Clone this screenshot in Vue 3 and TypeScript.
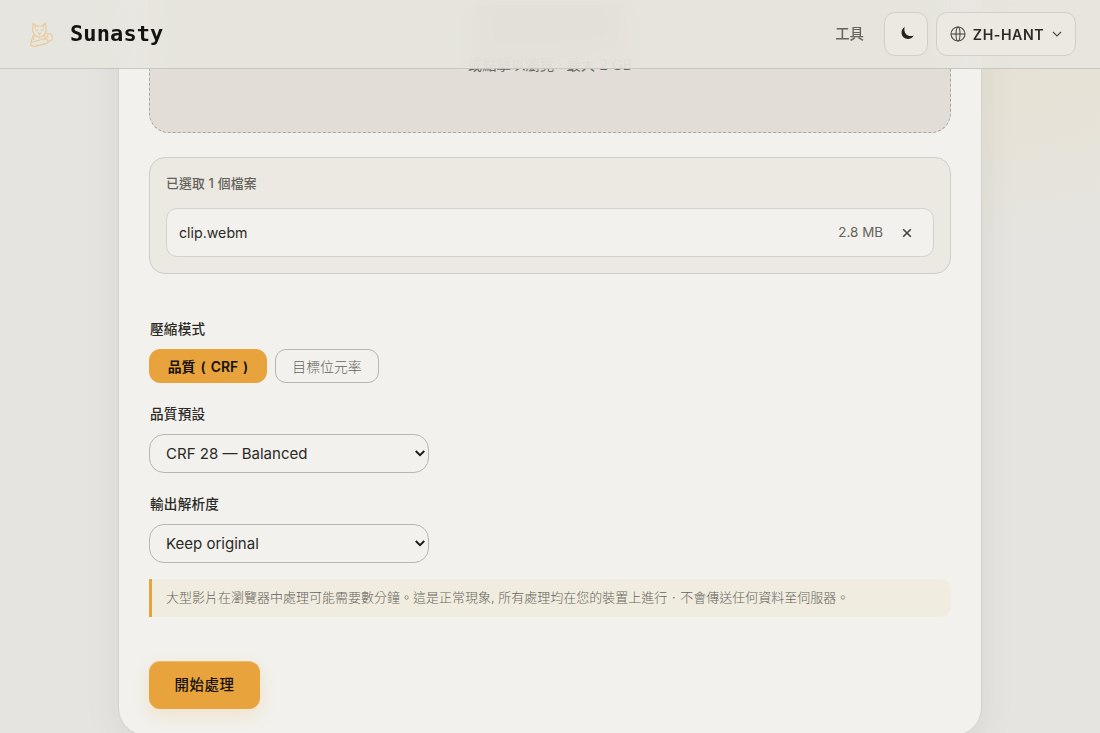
<script setup lang="ts">
import { ref } from 'vue'

type Mode = 'crf' | 'bitrate'

const files = ref([{ name: 'clip.webm', size: '2.8 MB' }])
const mode = ref<Mode>('crf')
const preset = ref('CRF 28 — Balanced')
const resolution = ref('Keep original')

function removeFile(name: string) {
  files.value = files.value.filter((f) => f.name !== name)
}
</script>

<template>
  <div class="page">
    <header class="topbar">
      <a class="brand">
        <svg class="cat" viewBox="0 0 28 28" fill="none" stroke="#e9c999" stroke-width="1.1" stroke-linejoin="round" stroke-linecap="round">
          <path d="M6 3.2 9.6 6h5.2L18.6 3l.5 8.2-2.2 4.4-4.4 1.9-4.6-2L5.7 11z" />
          <path d="m8.5 9.8 2 .8m3.7 0 2-.8M11.3 13l1.1.8 1.1-.8M12.4 13.8v1.5M8 5.8l.5 2m8.2-2-.6 2" />
          <path d="M6.500 15 4.300 21l-.8 4 3.200 1.600 13.200-3.200 1.400-2.600-2.300-1.800-3-.3-9 3-2.700.8" />
          <path d="M18.600 13.700h4.600l2.200 2.600-.4 3.800-3.400 1.700M7 16.500l-.5 3.300M21 14.500l-1.200 3.200M17.600 15.500l.6 3.500" />
        </svg>
        <span class="wordmark">Sunasty</span>
      </a>
      <nav class="actions">
        <a class="tools">工具</a>
        <button class="control theme" aria-label="Theme">
          <svg width="15" height="15" viewBox="0 0 15 15">
            <path d="M4.700.7C2.500 2.500 1.100 4.700 1.600 7.700c.6 3.200 3 5.200 6.200 5.200 2.700 0 4.900-1.200 5.900-3.500-2.800 1.200-5.900.7-7.700-1.400C4.300 6 4 3.300 4.700.7z" fill="#24221d" />
          </svg>
        </button>
        <button class="control lang">
          <svg width="16" height="16" viewBox="0 0 16 16" fill="none" stroke="#4c4a43" stroke-width="1.1">
            <circle cx="8" cy="8" r="7" />
            <ellipse cx="8" cy="8" rx="2" ry="7" />
            <path d="M1 8h14" />
          </svg>
          <span class="code">ZH-HANT</span>
          <svg class="caret" width="10" height="6" viewBox="0 0 10 6" fill="none" stroke="#4c4a43" stroke-width="1.1">
            <path d="m1 1 4 4 4-4" />
          </svg>
        </button>
      </nav>
    </header>

    <main class="card">
      <div class="dropzone">
        <span class="glow"></span>
        <span class="hint">或點擊以瀏覽 · 最大 2 GB</span>
      </div>

      <section class="files">
        <div class="count">已選取 {{ files.length }} 個檔案</div>
        <div v-for="f in files" :key="f.name" class="file">
          <span class="name">{{ f.name }}</span>
          <span class="size">{{ f.size }}</span>
          <button class="remove" aria-label="Remove" @click="removeFile(f.name)">
            <svg width="10" height="10" viewBox="0 0 10 10" stroke="#45433d" stroke-width="1.6" fill="none">
              <path d="m1.200 1.200 7.600 7.600m0-7.600-7.600 7.600" />
            </svg>
          </button>
        </div>
      </section>

      <div class="label">壓縮模式</div>
      <div class="modes">
        <button class="mode crf" :class="{ active: mode === 'crf' }" @click="mode = 'crf'">品質 ( CRF )</button>
        <button class="mode bitrate" :class="{ active: mode === 'bitrate' }" @click="mode = 'bitrate'">目標位元率</button>
      </div>

      <div class="label preset-label">品質預設</div>
      <div class="select">
        <span>{{ preset }}</span>
        <svg width="10" height="7" viewBox="0 0 10 7" fill="none" stroke="#1c1b18" stroke-width="1.9"><path d="m.8 1 4.200 4.200L9.200 1" /></svg>
      </div>

      <div class="label resolution-label">輸出解析度</div>
      <div class="select">
        <span>{{ resolution }}</span>
        <svg width="10" height="7" viewBox="0 0 10 7" fill="none" stroke="#1c1b18" stroke-width="1.9"><path d="m.8 1 4.200 4.200L9.200 1" /></svg>
      </div>

      <p class="notice">大型影片在瀏覽器中處理可能需要數分鐘。這是正常現象, 所有處理均在您的裝置上進行<i>·</i>不會傳送任何資料至伺服器。</p>

      <button class="start">開始處理</button>
    </main>
  </div>
</template>

<style>
body {
  background: #e5e4e0;
  overflow: hidden;
}
</style>

<style scoped>
.page {
  box-sizing: border-box;
  height: 733px;
  overflow: hidden;
  background:
    radial-gradient(ellipse 300px 220px at 1010px 20px, rgba(232, 222, 196, 0.5), rgba(232, 222, 196, 0.3) 55%, transparent),
    #e5e4e0;
  font-family: Inter, "Noto Sans CJK TC", sans-serif;
  color: #2b2a26;
}
.page * {
  box-sizing: border-box;
}
button {
  font: inherit;
  color: inherit;
  padding: 0;
  cursor: pointer;
}
.topbar {
  position: fixed;
  inset: 0 0 auto;
  z-index: 2;
  height: 69px;
  padding: 0 24px 0 27px;
  display: flex;
  align-items: center;
  justify-content: space-between;
  border-bottom: 1px solid #c8c7c1;
  background: rgba(230, 229, 222, 0.85);
  backdrop-filter: blur(14px);
}
.brand {
  display: flex;
  align-items: center;
  gap: 15px;
}
.cat {
  width: 28px;
  height: 28px;
}
.wordmark {
  font: 700 22px/28px "DejaVu Sans Mono", monospace;
  letter-spacing: 0.1px;
  color: #141310;
}
.actions {
  display: flex;
  align-items: center;
}
.tools {
  margin-right: 20px;
  padding-bottom: 4px;
  font-size: 14.4px;
  font-weight: 500;
  color: #66645d;
}
.control {
  height: 44px;
  display: flex;
  align-items: center;
  justify-content: center;
  border: 1px solid #d0cec8;
  border-radius: 11px;
  background: #ece9e2;
}
.theme {
  width: 44px;
  margin-right: 8px;
  padding: 0 0 2px 2px;
}
.lang {
  width: 140px;
}
.code {
  margin: 0 8px 0 7px;
  font-size: 14.2px;
  font-weight: 600;
  letter-spacing: 0.55px;
}
.card {
  width: 864px;
  height: 796px;
  margin: -60px auto 0;
  padding: 0 30px;
  border: 1px solid #d3d2cc;
  border-radius: 28px;
  background: #f2f1ed;
  box-shadow: 0 8px 36px rgba(70, 65, 50, 0.08);
}
.dropzone {
  height: 192px;
  padding-bottom: 57px;
  display: flex;
  flex-direction: column;
  align-items: center;
  justify-content: flex-end;
  border: 1px dashed #aaa7a0;
  border-radius: 20px;
  background: #e2ded7;
}
.glow {
  width: 150px;
  height: 44px;
  margin-bottom: 6px;
  background: #cbbfb4;
}
.hint {
  font-size: 14.4px;
  line-height: 20px;
  color: #69665f;
}
.files {
  height: 117px;
  margin-top: 24px;
  padding: 16px;
  border: 1px solid #cecdc8;
  border-radius: 16px;
  background: #ebe9e2;
}
.count {
  height: 20px;
  margin-bottom: 14px;
  font-size: 12.8px;
  line-height: 20px;
  font-weight: 500;
  letter-spacing: 0.2px;
  color: #65625a;
}
.file {
  height: 49px;
  padding: 0 21px 0 12px;
  display: flex;
  align-items: center;
  border: 1px solid #d3d2cd;
  border-radius: 11px;
  background: #f2f1ed;
}
.name {
  flex: 1;
  font-size: 14.2px;
}
.size {
  margin-right: 19px;
  padding-bottom: 1px;
  font-size: 13.4px;
  color: #65635c;
}
.remove {
  width: 10px;
  height: 10px;
  display: flex;
  border: 0;
  background: none;
}
.label {
  height: 20px;
  margin-top: 45px;
  padding-left: 1px;
  font-size: 13.6px;
  line-height: 20px;
  font-weight: 500;
  letter-spacing: 0.25px;
}
.modes {
  display: flex;
  gap: 8px;
  margin-top: 10px;
}
.mode {
  height: 34px;
  border: 1px solid #b8b6af;
  border-radius: 11px;
  background: transparent;
  font-size: 13.9px;
  font-weight: 300;
  color: #66645d;
}
.mode.active {
  border-color: #e8a33d;
  background: #e8a33d;
  font-weight: 600;
  word-spacing: 1.5px;
  color: #14110a;
}
.crf {
  width: 118px;
}
.bitrate {
  width: 104px;
}
.preset-label,
.resolution-label {
  margin-top: 21px;
}
.select {
  width: 280px;
  height: 39px;
  margin-top: 10px;
  padding: 0 3px 0 16px;
  display: flex;
  align-items: center;
  justify-content: space-between;
  border: 1px solid #b8b6af;
  border-radius: 15px;
  font-size: 15.04px;
}
.notice {
  height: 38px;
  margin: 16px 0 0;
  padding-left: 14px;
  border-left: 3px solid #e8a33d;
  border-radius: 0 11px 11px 0;
  background: #f0ecdf;
  font-size: 13px;
  line-height: 37px;
  font-weight: 300;
  color: #66645d;
}
.notice i {
  display: inline-block;
  width: 13px;
  font-style: normal;
  text-align: center;
}
.start {
  display: block;
  width: 111px;
  height: 48px;
  margin-top: 44px;
  padding-bottom: 4px;
  border: 0;
  border-radius: 11px;
  background: #e8a33d;
  box-shadow: 0 6px 18px rgba(232, 163, 61, 0.2), inset 0 1px 0 rgba(255, 255, 255, 0.25);
  font-size: 14.4px;
  font-weight: 500;
  letter-spacing: 0.6px;
  color: #14110a;
}
</style>
